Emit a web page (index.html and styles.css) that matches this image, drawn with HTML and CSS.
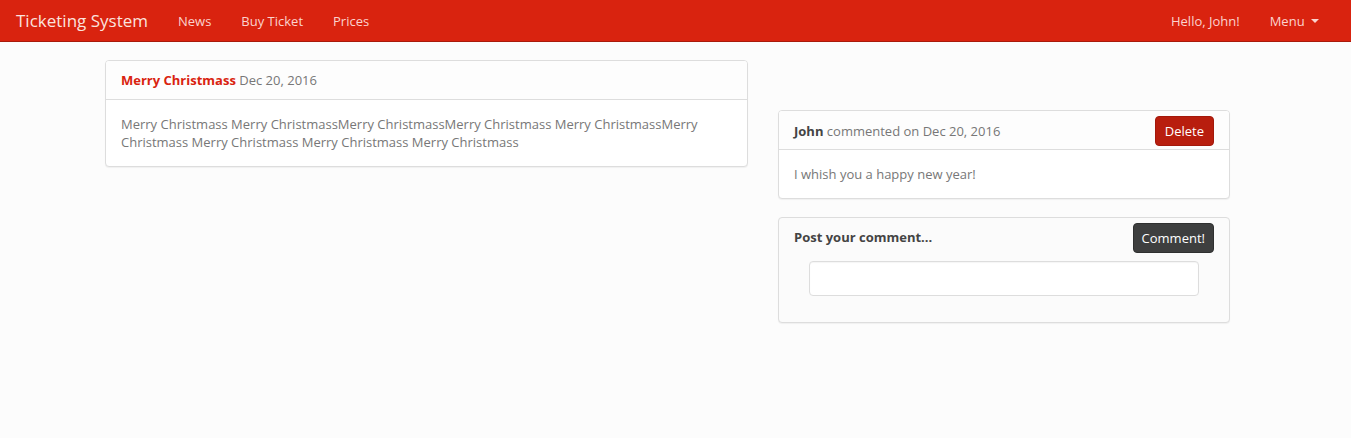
FILE: index.html
```html
<!DOCTYPE html>
<html>
<head>
<meta charset="utf-8">
<link rel="stylesheet" href="styles.css">
</head>
<body>
<nav class="navbar">
  <div class="nav-left">
    <a class="brand" href="#">Ticketing System</a>
    <a class="nav-link" href="#">News</a>
    <a class="nav-link" href="#">Buy Ticket</a>
    <a class="nav-link" href="#">Prices</a>
  </div>
  <div class="nav-right">
    <a class="nav-link" href="#">Hello, John!</a>
    <a class="nav-link" href="#">Menu <span class="caret"></span></a>
  </div>
</nav>
<main class="container">
  <section class="col-left">
    <div class="panel">
      <div class="panel-heading"><span class="title">Merry Christmass</span> Dec 20, 2016</div>
      <div class="panel-body">Merry Christmass Merry ChristmassMerry ChristmassMerry Christmass Merry ChristmassMerry Christmass Merry Christmass Merry Christmass Merry Christmass</div>
    </div>
  </section>
  <section class="col-right">
    <div class="panel">
      <div class="panel-heading heading-btn">
        <span><span class="author">John</span> commented on Dec 20, 2016</span>
        <button class="btn btn-danger">Delete</button>
      </div>
      <div class="panel-body">I whish you a happy new year!</div>
    </div>
    <div class="panel panel-form">
      <div class="form-head">
        <span class="form-title">Post your comment...</span>
        <button class="btn btn-dark">Comment!</button>
      </div>
      <div class="form-body">
        <input class="input" type="text">
      </div>
    </div>
  </section>
</main>
</body>
</html>
```
FILE: styles.css
```css
* { box-sizing: border-box; }
html, body { margin: 0; padding: 0; }
body {
  background: #fcfcfc;
  font-family: "Open Sans", "Liberation Sans", sans-serif;
  font-size: 13px;
  line-height: 18px;
  color: #777;
  height: 438px;
}
a { text-decoration: none; }
.navbar {
  height: 42px;
  background: #d9230f;
  border-bottom: 1px solid #a91b0c;
  display: flex;
  justify-content: space-between;
  align-items: stretch;
  padding: 0 17px 0 1px;
}
.nav-left, .nav-right { display: flex; align-items: center; }
.brand {
  font-size: 17px;
  color: #fbe2de;
  padding: 0 15px;
  line-height: 42px;
}
.nav-link {
  color: #fbd3ce;
  padding: 0 15px;
  line-height: 42px;
}
.caret {
  display: inline-block;
  width: 0; height: 0;
  border-left: 4px solid transparent;
  border-right: 4px solid transparent;
  border-top: 4px solid #fbd3ce;
  vertical-align: middle;
  margin-left: 3px;
  position: relative;
  top: -1px;
}
.container {
  width: 1125px;
  margin: 18px 0 0 105px;
  display: flex;
  gap: 30px;
  align-items: flex-start;
}
.col-left { width: 643px; }
.col-right { width: 452px; padding-top: 50px; display: flex; flex-direction: column; gap: 18px; }
.panel {
  background: #fff;
  border: 1px solid #dddddd;
  border-radius: 4px;
  box-shadow: 0 1px 1px rgba(0,0,0,0.05);
}
.panel-heading {
  padding: 10px 15px;
  border-bottom: 1px solid #dddddd;
  background: #fdfdfd;
  border-radius: 3px 3px 0 0;
}
.heading-btn {
  display: flex;
  justify-content: space-between;
  align-items: center;
  padding: 5px 15px 3px;
}
.title { color: #d9230f; font-weight: 700; }
.author { color: #444; font-weight: 700; }
.panel-body { padding: 15px; }
.btn {
  font-family: "Open Sans", "Liberation Sans", sans-serif;
  font-size: 13px;
  line-height: 18px;
  padding: 5px 9px;
  border-radius: 4px;
  color: #fff;
  cursor: pointer;
}
.btn-danger {
  background: #b81e0e;
  border: 1px solid #a3180b;
}
.btn-dark {
  background: #3e3f3f;
  border: 1px solid #2f3030;
  padding: 5px 8px;
}
.panel-form { background: #fbfbfb; }
.form-head {
  display: flex;
  justify-content: space-between;
  align-items: center;
  padding: 5px 15px 0;
}
.form-title { color: #444; font-weight: 700; position: relative; top: -1px; }
.form-body { padding: 8px 30px 26px; }
.input {
  display: block;
  width: 100%;
  height: 35px;
  border: 1px solid #dddddd;
  border-radius: 4px;
  background: #fff;
  box-shadow: inset 0 1px 1px rgba(0,0,0,0.04);
}
```
